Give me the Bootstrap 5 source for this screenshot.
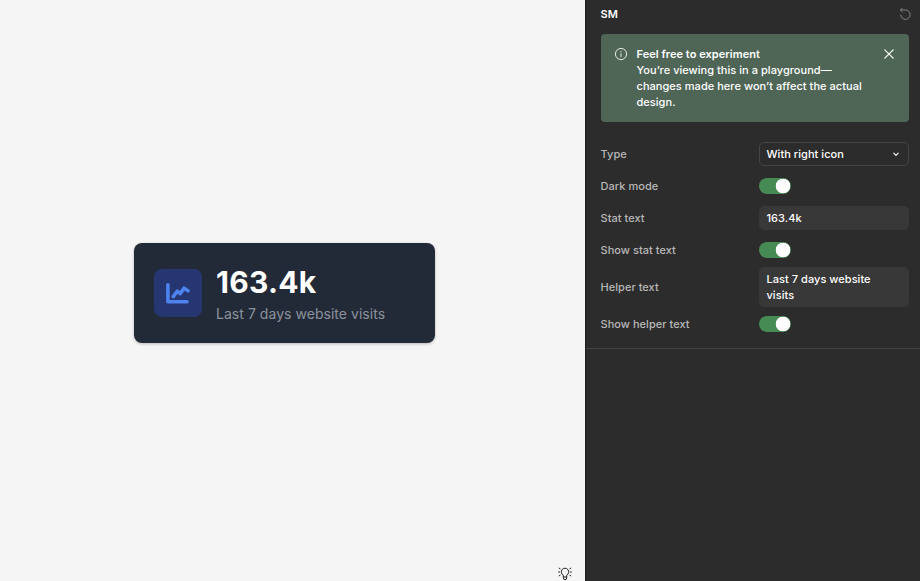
<!DOCTYPE html>
<html lang="en">
<head>
<meta charset="utf-8">
<meta name="viewport" content="width=device-width, initial-scale=1">
<title>Playground</title>
<link href="https://cdn.jsdelivr.net/npm/bootstrap@5.3.0/dist/css/bootstrap.min.css" rel="stylesheet">
<style>
body{font-family:Inter,"Liberation Sans",sans-serif;background:#f5f5f5}
.stage{background:#f5f5f5}
.stat-card{width:301px;height:100px;background:#232a37;border-radius:8px;padding:0 20px;gap:14px;margin-top:5px;margin-right:16px;box-shadow:0 1px 3px rgba(0,0,0,.25)}
.stat-icon{width:48px;height:48px;border-radius:8px;background:#263671}
.stat-copy{padding-top:2px}
.stat-value{font-size:30px;line-height:36px;color:#fff;letter-spacing:.25px}
.stat-help{font-size:14px;line-height:20px;color:#8b929e;margin-top:4px;letter-spacing:.04px}
.hint{right:12.5px;bottom:0}
.panel{width:335px;background:#2c2c2c;border-left:1px solid #1e1e1e;font-size:11px;line-height:16px;font-weight:500;letter-spacing:.04px;color:#fff}
.panel-body{padding:0 11.5px 12px 14.5px;border-bottom:1px solid #444}
.panel-title{height:28px;margin-bottom:6px;font-weight:600;margin-right:-3px}
.notice{height:88px;background:#4f6657;border-radius:4px;padding:12px 13px;margin-bottom:20px;border:0}
.notice p{width:240px;margin:0 0 0 9px}
.notice strong{font-weight:600;display:block}
.notice-icon{margin-top:2px}
.prop{min-height:24px}
.prop-label{width:158px;color:#b8b8b8}
.prop-list{gap:8px}
.prop.helper{margin:-3px 0}
.field{width:150px;min-height:24px;padding:4px 8px;border-radius:5px;background:#383838}
.pick{background:none;border:1px solid #444;padding:3px 7px}
.toggle.form-check-input{width:32px;height:16px;margin:0;border:0;background-color:#468a54;box-shadow:none;background-image:radial-gradient(circle at 24px 8px,#fff 7px,transparent 7.6px);background-size:100% 100%}
</style>
<script src="https://cdn.jsdelivr.net/npm/bootstrap@5.3.0/dist/js/bootstrap.bundle.min.js"></script>
</head>
<body class="d-flex vh-100 overflow-hidden">
<main class="stage flex-grow-1 position-relative d-flex align-items-center justify-content-center">
  <section class="stat-card d-flex align-items-center">
    <div class="stat-icon d-flex align-items-center justify-content-center flex-shrink-0">
      <svg width="24" height="24" viewBox="0 0 24 24" fill="none" stroke="#4d82ef" stroke-width="3.6" stroke-linecap="round" stroke-linejoin="round"><path d="M1.900 3.800v16.900H21"/><path d="M7.300 15.600 11.200 10.200 14.200 12.600 18 7.200 22 9.800"/></svg>
    </div>
    <div class="stat-copy">
      <div class="stat-value fw-bold">163.4k</div>
      <div class="stat-help text-nowrap">Last 7 days website visits</div>
    </div>
  </section>
  <svg class="hint position-absolute" width="16" height="17" viewBox="0 0 16 17" fill="none" stroke="#222" stroke-linecap="round"><path d="M6.300 13v-1.800a3.700 3.700 0 1 1 3.400 0V14a1.700 1.700 0 0 1-3.400 0ZM6.500 13h3M1.600 8H2.600M13.400 8h1M2.200 4.200l.9.5M13.800 4.200l-.9.5M2.200 11.800l.9-.5M13.800 11.800l-.9-.5"/></svg>
</main>
<aside class="panel flex-shrink-0">
  <div class="panel-body">
    <header class="panel-title d-flex align-items-center justify-content-between">
      <span>SM</span>
      <svg width="14" height="14" viewBox="0 0 14 14" fill="none" stroke="#858585" stroke-linecap="round" stroke-linejoin="round"><path d="M4.200 1.200 2.400 3 4.200 4.800M2.600 3H7.400a4.700 4.700 0 1 1-4.700 5.200"/></svg>
    </header>
    <div class="notice d-flex align-items-start" role="alert">
      <svg class="notice-icon flex-shrink-0" width="14" height="14" viewBox="0 0 14 14" fill="none" stroke="#e4e9e6"><circle cx="7" cy="6" r="5.600"/><path d="M7 5.300V9M7 3v1.200"/></svg>
      <p><strong>Feel free to experiment</strong>You’re viewing this in a playground—<br>changes made here won’t affect the actual<br>design.</p>
      <svg class="notice-icon ms-auto flex-shrink-0" width="14" height="14" viewBox="0 0 14 14" fill="none" stroke="#fff" stroke-width="1.200" stroke-linecap="round"><path d="m2.800 1.800 8.400 8.400m0-8.400-8.400 8.400"/></svg>
    </div>
    <div class="prop-list d-flex flex-column">
      <div class="prop d-flex align-items-center"><span class="prop-label">Type</span><div class="field pick d-flex align-items-center justify-content-between">With right icon<svg width="10" height="8" viewBox="0 0 10 8" fill="none" stroke="#fff" stroke-width="1.100" stroke-linecap="round" stroke-linejoin="round"><path d="m2.800 3.200 2.200 2.200 2.200-2.200"/></svg></div></div>
      <div class="prop d-flex align-items-center"><label class="prop-label" for="dark">Dark mode</label><input class="form-check-input toggle rounded-pill" type="checkbox" id="dark" checked></div>
      <div class="prop d-flex align-items-center"><span class="prop-label">Stat text</span><div class="field">163.4k</div></div>
      <div class="prop d-flex align-items-center"><label class="prop-label" for="stat">Show stat text</label><input class="form-check-input toggle rounded-pill" type="checkbox" id="stat" checked></div>
      <div class="prop helper d-flex align-items-center"><span class="prop-label">Helper text</span><div class="field">Last 7 days website<br>visits</div></div>
      <div class="prop d-flex align-items-center"><label class="prop-label" for="help">Show helper text</label><input class="form-check-input toggle rounded-pill" type="checkbox" id="help" checked></div>
    </div>
  </div>
</aside>
</body>
</html>
